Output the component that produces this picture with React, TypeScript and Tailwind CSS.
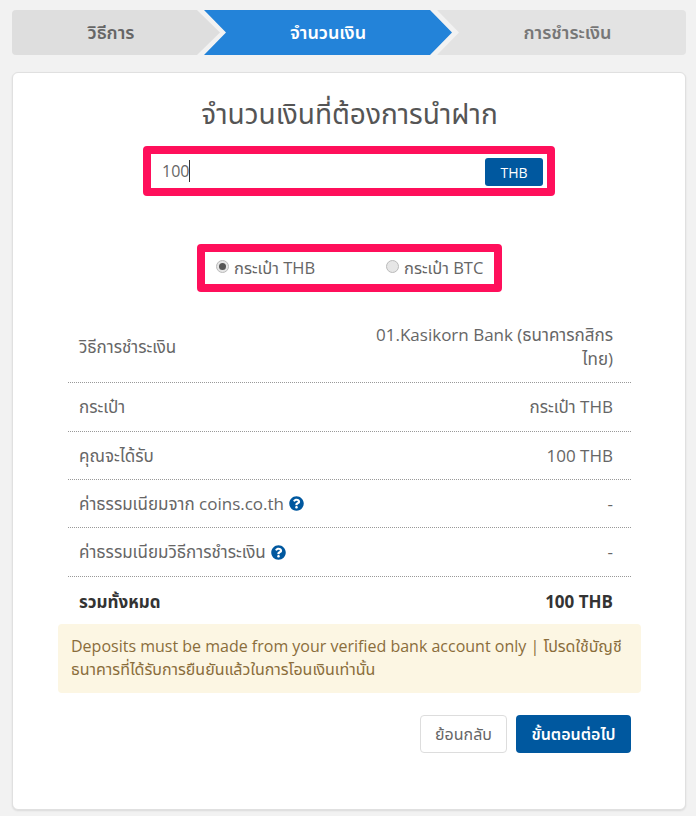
import React from "react";
import { FaQuestionCircle } from "react-icons/fa";

const font = "font-['Open_Sans','Noto_Sans_Thai','Noto_Sans',Tahoma,sans-serif]";

const Row = ({ label, value, help, bold, tall, h }: { label: string; value: string; help?: boolean; bold?: boolean; tall?: boolean; h: string }) => (
  <div className={`flex items-center justify-between pl-[11px] pr-[18px] ${h} ${bold ? "text-[#333] font-bold pt-[3px]" : "border-b border-dotted border-[#999]"}`}>
    <div className="flex items-center shrink-0">
      {label}
      {help && <FaQuestionCircle className="w-[15px] h-[15px] ml-[5px] shrink-0 text-[#00589f]" />}
    </div>
    <div className={tall ? "text-right w-[250px] leading-[24px]" : ""}>{value}</div>
  </div>
);

export default function App() {
  return (
    <div className={`${font} bg-[#f2f2f2] h-[816px] overflow-hidden pl-[12px] pr-[10px] pt-[10px] text-[16px] text-[#666]`}>
      {/* Steps */}
      <div className="flex h-[45px] font-semibold text-[18px]">
        <div className="w-[208px] bg-[#dedede] rounded-l-[4px] flex items-center justify-center pr-[10px] [clip-path:polygon(0_0,185px_0,208px_50%,185px_100%,0_100%)]">
          วิธีการ
        </div>
        <div className="w-[248px] -ml-[16px] bg-[#2383d9] text-white flex items-center justify-center [clip-path:polygon(0_0,226px_0,248px_50%,226px_100%,0_100%,22px_50%)]">
          จำนวนเงิน
        </div>
        <div className="w-[249px] -ml-[15px] bg-[#e3e3e3] text-[#777] rounded-r-[4px] flex items-center justify-center pl-[12px] [clip-path:polygon(0_0,100%_0,100%_100%,0_100%,22px_50%)]">
          การชำระเงิน
        </div>
      </div>

      {/* Card */}
      <div className="mt-[17px] h-[738px] bg-white border border-[#e0e0e0] rounded-[6px] shadow-[0_1px_2px_rgba(0,0,0,0.1)] pl-[55px] pr-[54px] pt-[22px]">
        <h1 className="text-center text-[28px] leading-[36px] text-[#555]">จำนวนเงินที่ต้องการนำฝาก</h1>

        <div className="mt-[15px] ml-[75px] w-[412px] h-[50px] border-[8px] border-[#ff0f5b] rounded-[4px] flex items-center justify-between pl-[11px] pr-[4px]">
          <div className="flex items-center h-[26px]">
            100
            <span className="w-px h-[22px] bg-[#333]" />
          </div>
          <div className="w-[58px] h-[28px] mt-[2px] bg-[#00589f] text-white text-[14px] rounded-[3px] flex items-center justify-center">THB</div>
        </div>

        <div className="mt-[48px] mx-auto w-[305px] h-[48px] border-[8px] border-[#ff0f5b] rounded-[4px] flex items-center pl-[11px] text-[16.5px]">
          <div className="flex items-center w-[170px]">
            <span className="w-[13px] h-[13px] rounded-full bg-[#e6e6e6] border border-[#bbb] flex items-center justify-center mr-[5px] -mt-[3px]">
              <span className="w-[7px] h-[7px] rounded-full bg-[#555]" />
            </span>
            กระเป๋า THB
          </div>
          <div className="flex items-center">
            <span className="w-[13px] h-[13px] rounded-full bg-[#e6e6e6] border border-[#bbb] mr-[5px] -mt-[3px]" />
            กระเป๋า BTC
          </div>
        </div>

        <div className="mt-[19px] text-[17px]">
          <Row h="h-[72px]" label="วิธีการชำระเงิน" value="01.Kasikorn Bank (ธนาคารกสิกรไทย)" tall />
          <Row h="h-[49px]" label="กระเป๋า" value="กระเป๋า THB" />
          <Row h="h-[48px]" label="คุณจะได้รับ" value="100 THB" />
          <Row h="h-[48px]" label="ค่าธรรมเนียมจาก coins.co.th" value="-" help />
          <Row h="h-[49px]" label="ค่าธรรมเนียมวิธีการชำระเงิน" value="-" help />
          <Row h="h-[47px]" label="รวมทั้งหมด" value="100 THB" bold />
        </div>

        <div className="-mx-[10px] h-[69px] bg-[#fcf6e3] rounded-[4px] text-[#8a6d3b] pl-[13px] pr-[16px] pt-[11px] leading-[23px]">
          Deposits must be made from your verified bank account only | โปรดใช้บัญชีธนาคารที่ได้รับการยืนยันแล้วในการโอนเงินเท่านั้น
        </div>

        <div className="mt-[22px] flex justify-end gap-[9px]">
          <div className="w-[87px] h-[38px] border border-[#ddd] rounded-[4px] flex items-center justify-center">ย้อนกลับ</div>
          <div className="w-[115px] h-[38px] bg-[#00589f] text-white font-semibold rounded-[4px] flex items-center justify-center">ขั้นตอนต่อไป</div>
        </div>
      </div>
    </div>
  );
}
